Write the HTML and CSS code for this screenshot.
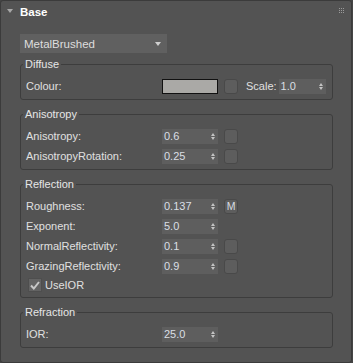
FILE: index.html
```html
<!DOCTYPE html>
<html>
<head>
<meta charset="utf-8">
<link rel="stylesheet" href="styles.css">
</head>
<body>
<div class="panel">
  <div class="header">
    <span class="tri"></span>
    <span class="title">Base</span>
    <svg class="grip" width="5" height="5" viewBox="0 0 5 5">
      <rect x="0" y="0" width="1" height="1"/><rect x="2" y="0" width="1" height="1"/><rect x="4" y="0" width="1" height="1"/>
      <rect x="0" y="2" width="1" height="1"/><rect x="2" y="2" width="1" height="1"/><rect x="4" y="2" width="1" height="1"/>
      <rect x="0" y="4" width="1" height="1"/><rect x="2" y="4" width="1" height="1"/><rect x="4" y="4" width="1" height="1"/>
    </svg>
  </div>
  <div class="content">
    <div class="dropdown"><span>MetalBrushed</span><span class="dd-arrow"></span></div>

    <div class="group">
      <div class="gtitle">Diffuse</div>
      <div class="row">
        <span class="label">Colour:</span>
        <span class="swatch"></span>
        <span class="cb"></span>
        <span class="scale-label">Scale:</span>
        <span class="spin narrow"><span class="val">1.0</span><span class="arrows"><i class="up"></i><i class="dn"></i></span></span>
      </div>
    </div>

    <div class="group">
      <div class="gtitle">Anisotropy</div>
      <div class="row">
        <span class="label">Anisotropy:</span>
        <span class="spin"><span class="val">0.6</span><span class="arrows"><i class="up"></i><i class="dn"></i></span></span>
        <span class="cb"></span>
      </div>
      <div class="row">
        <span class="label">AnisotropyRotation:</span>
        <span class="spin"><span class="val">0.25</span><span class="arrows"><i class="up"></i><i class="dn"></i></span></span>
        <span class="cb"></span>
      </div>
    </div>

    <div class="group">
      <div class="gtitle">Reflection</div>
      <div class="row">
        <span class="label">Roughness:</span>
        <span class="spin"><span class="val">0.137</span><span class="arrows"><i class="up"></i><i class="dn"></i></span></span>
        <span class="cb mbtn">M</span>
      </div>
      <div class="row">
        <span class="label">Exponent:</span>
        <span class="spin"><span class="val">5.0</span><span class="arrows"><i class="up"></i><i class="dn"></i></span></span>
      </div>
      <div class="row">
        <span class="label">NormalReflectivity:</span>
        <span class="spin"><span class="val">0.1</span><span class="arrows"><i class="up"></i><i class="dn"></i></span></span>
        <span class="cb"></span>
      </div>
      <div class="row">
        <span class="label">GrazingReflectivity:</span>
        <span class="spin"><span class="val">0.9</span><span class="arrows"><i class="up"></i><i class="dn"></i></span></span>
        <span class="cb"></span>
      </div>
      <div class="row checkrow">
        <span class="check">
          <svg width="10" height="9" viewBox="0 0 10 9"><path d="M1 4.5 L3.8 7.5 L9 1" fill="none" stroke="#c8c8c8" stroke-width="2"/></svg>
        </span>
        <span class="checklabel">UseIOR</span>
      </div>
    </div>

    <div class="group">
      <div class="gtitle">Refraction</div>
      <div class="row">
        <span class="label">IOR:</span>
        <span class="spin"><span class="val">25.0</span><span class="arrows"><i class="up"></i><i class="dn"></i></span></span>
      </div>
    </div>
  </div>
</div>
</body>
</html>
```
FILE: styles.css
```css
html, body {
  margin: 0;
  padding: 0;
  background: #454545;
}
body {
  font-family: "Liberation Sans", Arial, sans-serif;
  font-size: 11px;
  color: #e0e0e0;
}
.panel {
  width: 352px;
  height: 363px;
  box-sizing: border-box;
  border: 1px solid #3b3b3b;
  border-radius: 3px;
  background: #535353;
}
.header {
  height: 22px;
  display: flex;
  align-items: center;
  padding-left: 6px;
  padding-right: 7px;
}
.tri {
  width: 0;
  height: 0;
  border-left: 3px solid transparent;
  border-right: 3px solid transparent;
  border-top: 4px solid #a8a8a8;
  margin-right: 7px;
  margin-top: -2px;
}
.title {
  font-weight: bold;
  font-size: 11.5px;
  color: #ffffff;
  flex: 1;
}
.grip {
  fill: #9a9a9a;
  margin-top: -3px;
}
.content {
  padding: 11px 18px 0 19px;
}
.dropdown {
  width: 147px;
  height: 19px;
  box-sizing: border-box;
  background: #606060;
  display: flex;
  align-items: center;
  justify-content: space-between;
  padding: 0 6px 0 4px;
  color: #dedede;
  font-size: 11.5px;
}
.dd-arrow {
  width: 0;
  height: 0;
  border-left: 3px solid transparent;
  border-right: 3px solid transparent;
  border-top: 4px solid #cfcfcf;
}
.group {
  margin-top: 11px;
  border: 1px solid #3d3d3d;
  border-radius: 3px;
  padding: 0 0 3px 5px;
}
.group + .group {
  margin-top: 14px;
}
.gtitle {
  width: fit-content;
  margin-top: -7px;
  margin-left: -3px;
  margin-bottom: 6px;
  padding: 0 2px;
  line-height: 12px;
  background: #535353;
  color: #e6e6e6;
}
.row {
  height: 20px;
  display: flex;
  align-items: center;
}
.label {
  width: 136px;
  flex: none;
}
.spin {
  width: 56px;
  height: 15px;
  box-sizing: border-box;
  background: #5e5e5e;
  display: flex;
  align-items: center;
  justify-content: space-between;
  padding: 0 3px 0 2px;
  color: #dadfe4;
  flex: none;
}
.spin.narrow {
  width: 47px;
}
.arrows {
  display: flex;
  flex-direction: column;
  gap: 1px;
}
.arrows i {
  display: block;
  width: 0;
  height: 0;
  border-left: 2.5px solid transparent;
  border-right: 2.5px solid transparent;
}
.arrows .up {
  border-bottom: 3px solid #c4c4c4;
}
.arrows .dn {
  border-top: 3px solid #c4c4c4;
}
.swatch {
  width: 56px;
  height: 15px;
  box-sizing: border-box;
  border: 1px solid #111;
  background: #aaa9a6;
  flex: none;
}
.cb {
  width: 14px;
  height: 15px;
  box-sizing: border-box;
  margin-left: 6px;
  border: 1px solid #494949;
  border-radius: 3px;
  background: #5d5d5d;
  flex: none;
}
.mbtn {
  display: flex;
  align-items: center;
  justify-content: center;
  font-size: 10.5px;
  color: #d8dde2;
}
.scale-label {
  margin-left: 8px;
  margin-right: 2px;
}
.checkrow {
  height: 18px;
}
.check {
  width: 14px;
  height: 14px;
  box-sizing: border-box;
  margin-left: 2px;
  margin-right: 3px;
  background: #636363;
  border: 1px solid #4e4e4e;
  display: flex;
  align-items: center;
  justify-content: center;
}
.check svg {
  display: block;
}
```
